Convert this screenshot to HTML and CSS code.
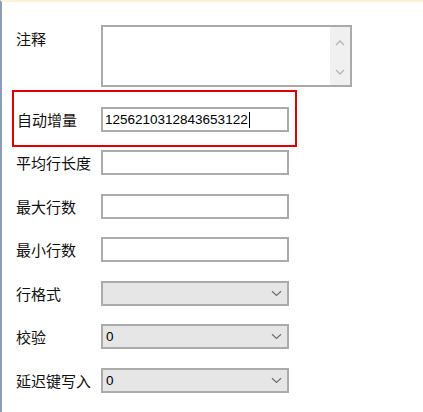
FILE: index.html
```html
<!DOCTYPE html>
<html>
<head>
<meta charset="utf-8">
<link rel="stylesheet" href="styles.css">
</head>
<body>
<div class="panel">
  <div class="row row-note">
    <div class="label label-top">注释</div>
    <div class="textarea">
      <div class="scrollbar">
        <svg class="sb-arrow" width="10" height="6" viewBox="0 0 10 6"><path d="M1 5 L5 1 L9 5" fill="none" stroke="#b4b4b4" stroke-width="1.3"/></svg>
        <svg class="sb-arrow" width="10" height="6" viewBox="0 0 10 6"><path d="M1 1 L5 5 L9 1" fill="none" stroke="#b4b4b4" stroke-width="1.3"/></svg>
      </div>
    </div>
  </div>
  <div class="highlight">
    <div class="row row-hl">
      <div class="label label-hl">自动增量</div>
      <div class="input"><span class="value">1256210312843653122</span><span class="caret"></span></div>
    </div>
  </div>
  <div class="row row-first">
    <div class="label">平均行长度</div>
    <div class="input"></div>
  </div>
  <div class="row">
    <div class="label">最大行数</div>
    <div class="input"></div>
  </div>
  <div class="row">
    <div class="label">最小行数</div>
    <div class="input"></div>
  </div>
  <div class="row">
    <div class="label">行格式</div>
    <div class="select"><span class="value"></span><svg class="chev" width="11" height="7" viewBox="0 0 11 7"><path d="M1 1.2 L5.5 5.5 L10 1.2" fill="none" stroke="#6e6e6e" stroke-width="1.2"/></svg></div>
  </div>
  <div class="row">
    <div class="label">校验</div>
    <div class="select"><span class="value">0</span><svg class="chev" width="11" height="7" viewBox="0 0 11 7"><path d="M1 1.2 L5.5 5.5 L10 1.2" fill="none" stroke="#6e6e6e" stroke-width="1.2"/></svg></div>
  </div>
  <div class="row">
    <div class="label">延迟键写入</div>
    <div class="select"><span class="value">0</span><svg class="chev" width="11" height="7" viewBox="0 0 11 7"><path d="M1 1.2 L5.5 5.5 L10 1.2" fill="none" stroke="#6e6e6e" stroke-width="1.2"/></svg></div>
  </div>
</div>
</body>
</html>
```
FILE: styles.css
```css
html, body {
  margin: 0;
  padding: 0;
  background: #ffffff;
}
.panel {
  box-sizing: border-box;
  width: 423px;
  height: 412px;
  border-left: 2px solid #8d9db8;
  border-top: 2px solid #fcf1da;
  padding: 23px 0 0 14px;
  font-family: "Noto Sans CJK SC", "Noto Sans", sans-serif;
  font-size: 15px;
  color: #111;
}
.row {
  display: flex;
  align-items: center;
  height: 25px;
  margin-top: 18.5px;
}
.row-note {
  align-items: flex-start;
  height: 62px;
  margin-top: 0;
}
.row-first {
  margin-top: 3px;
}
.label {
  width: 85px;
  flex: none;
  line-height: 15px;
  white-space: nowrap;
}
.label-top {
  padding-top: 6px;
}
.textarea {
  box-sizing: border-box;
  width: 251px;
  height: 62px;
  border: 2px solid #aaaaaa;
  background: #fff;
  display: flex;
  justify-content: flex-end;
}
.scrollbar {
  width: 20px;
  height: 100%;
  background: #f0f0f0;
  display: flex;
  flex-direction: column;
  align-items: center;
  justify-content: space-between;
  padding: 13px 0 10px;
  box-sizing: border-box;
}
.sb-arrow {
  display: block;
}
.highlight {
  box-sizing: border-box;
  width: 285px;
  height: 57px;
  margin: 3px 0 0 -4px;
  border: 2px solid #e50000;
  padding: 15px 0 0 3px;
}
.row-hl {
  margin-top: 0;
}
.label-hl {
  width: 84px;
}
.input, .select {
  box-sizing: border-box;
  width: 188px;
  height: 25px;
  border: 2px solid #ababab;
  background: #fff;
  display: flex;
  align-items: center;
  padding-left: 2px;
  font-family: "Liberation Sans", Arial, sans-serif;
  font-size: 13.5px;
  color: #000;
}
.caret {
  display: inline-block;
  width: 1px;
  height: 16px;
  background: #000;
  margin-left: 1px;
}
.select {
  background: #e6e6e6;
  justify-content: space-between;
  padding-left: 3px;
  padding-right: 5px;
}
.chev {
  display: block;
}
```
